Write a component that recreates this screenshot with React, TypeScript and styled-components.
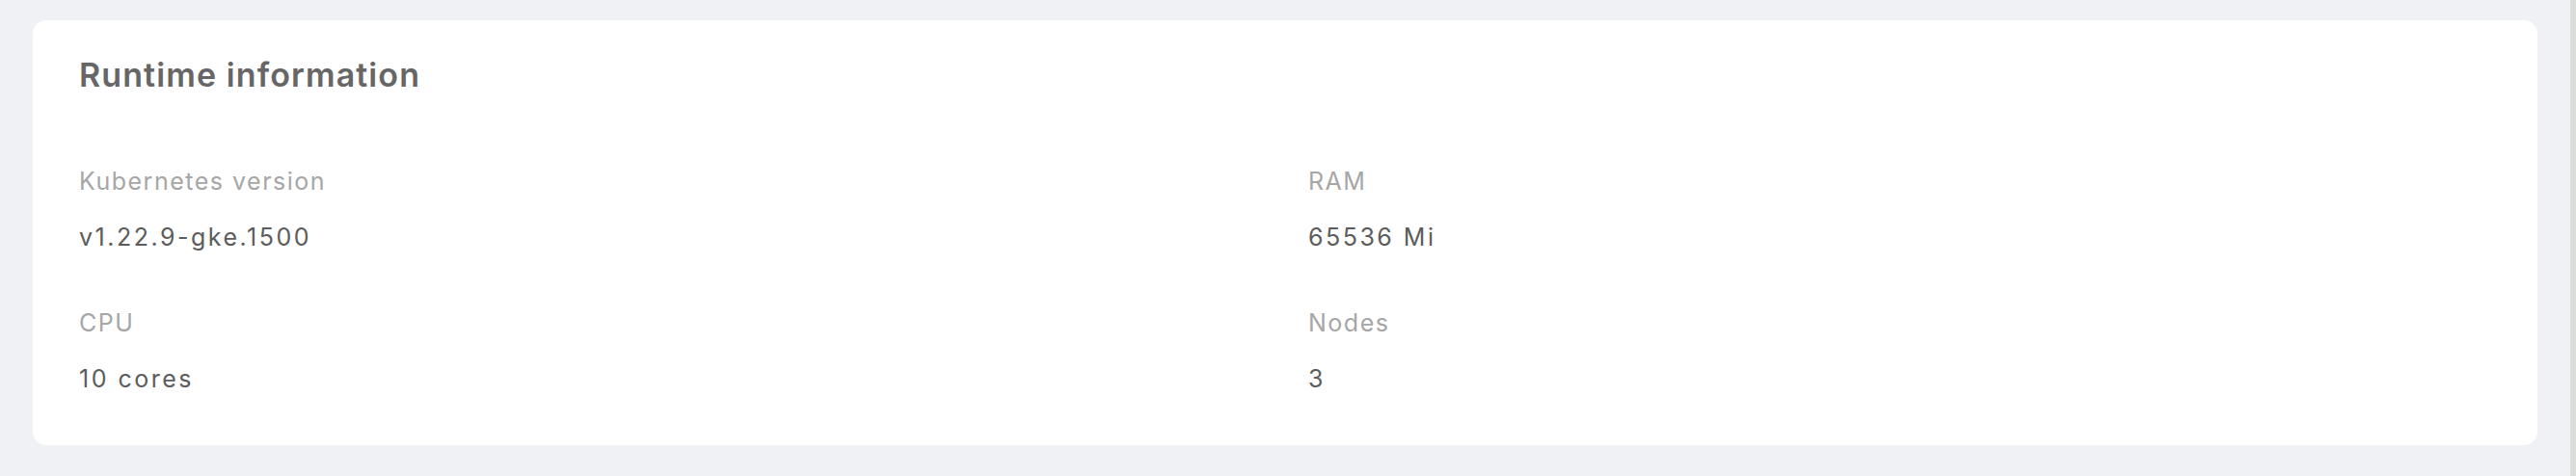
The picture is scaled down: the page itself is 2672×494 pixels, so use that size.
import React from "react";
import styled, { createGlobalStyle } from "styled-components";

const GlobalStyle = createGlobalStyle`
  html, body {
    margin: 0;
    padding: 0;
    background: #f0f1f4;
    font-family: Inter, "Noto Sans", sans-serif;
  }
`;

const Page = styled.div`
  display: flex;
  width: 2672px;
  height: 494px;
  box-sizing: border-box;
`;

const Content = styled.main`
  flex: 1;
  padding: 21px 34px 32px 34px;
  box-sizing: border-box;
`;

const Gutter = styled.div`
  width: 6px;
  background: #dcdcdc;
`;

const Card = styled.section`
  background: #ffffff;
  border-radius: 14px;
  padding: 37px 48px 0 48px;
  height: 441px;
  box-sizing: border-box;
`;

const Title = styled.h2`
  margin: 0 0 74px 0;
  font-size: 34px;
  line-height: 40px;
  font-weight: 600;
  letter-spacing: 1.1px;
  color: #666666;
`;

const Grid = styled.div`
  display: grid;
  grid-template-columns: 1fr 1fr;
  column-gap: 48px;
  row-gap: 57px;
`;

const Item = styled.div`
  display: flex;
  flex-direction: column;
  gap: 26px;
`;

const Label = styled.div`
  font-size: 25px;
  line-height: 32px;
  letter-spacing: 1.5px;
  color: #a6a6a6;
`;

const Value = styled.div`
  font-size: 25px;
  line-height: 32px;
  letter-spacing: 2.5px;
  color: #5c5c5c;
`;

const items = [
  { label: "Kubernetes version", value: "v1.22.9-gke.1500" },
  { label: "RAM", value: "65536 Mi" },
  { label: "CPU", value: "10 cores" },
  { label: "Nodes", value: "3" },
];

export default function App() {
  return (
    <>
      <GlobalStyle />
      <Page>
        <Content>
          <Card>
            <Title>Runtime information</Title>
            <Grid>
              {items.map((it) => (
                <Item key={it.label}>
                  <Label>{it.label}</Label>
                  <Value>{it.value}</Value>
                </Item>
              ))}
            </Grid>
          </Card>
        </Content>
        <Gutter />
      </Page>
    </>
  );
}
